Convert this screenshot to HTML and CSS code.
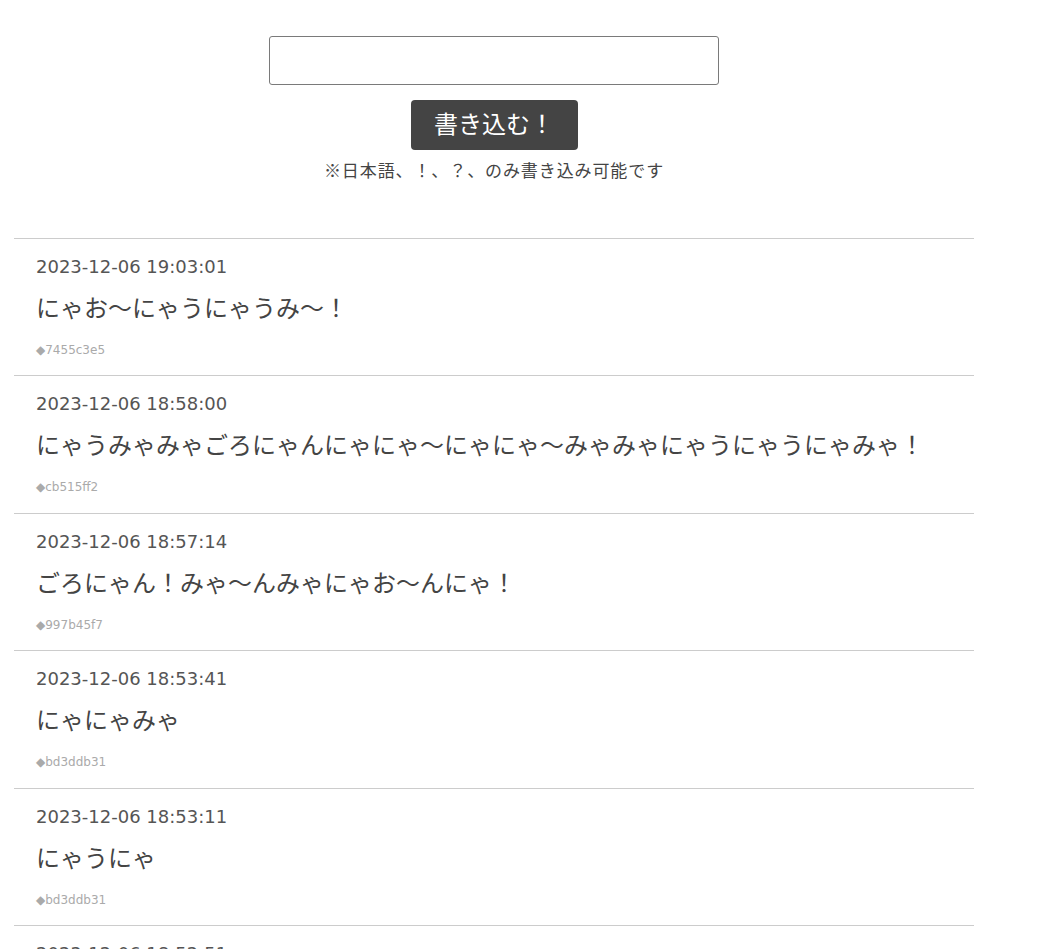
FILE: index.html
```html
<!DOCTYPE html>
<html lang="ja">
<head>
<meta charset="utf-8">
<title>にゃー掲示板</title>
<link rel="stylesheet" href="styles.css">
</head>
<body>
<div class="page">
  <form class="post-form" onsubmit="return false">
    <input class="post-input" type="text" aria-label="書き込み">
    <button class="post-button" type="submit">書き込む！</button>
    <p class="post-note">※日本語、！、？、のみ書き込み可能です</p>
  </form>
  <ul class="posts">
    <li class="post">
      <div class="post-date">2023-12-06 19:03:01</div>
      <div class="post-body">にゃお〜にゃうにゃうみ〜！</div>
      <div class="post-id">◆7455c3e5</div>
    </li>
    <li class="post">
      <div class="post-date">2023-12-06 18:58:00</div>
      <div class="post-body">にゃうみゃみゃごろにゃんにゃにゃ〜にゃにゃ〜みゃみゃにゃうにゃうにゃみゃ！</div>
      <div class="post-id">◆cb515ff2</div>
    </li>
    <li class="post">
      <div class="post-date">2023-12-06 18:57:14</div>
      <div class="post-body">ごろにゃん！みゃ〜んみゃにゃお〜んにゃ！</div>
      <div class="post-id">◆997b45f7</div>
    </li>
    <li class="post">
      <div class="post-date">2023-12-06 18:53:41</div>
      <div class="post-body">にゃにゃみゃ</div>
      <div class="post-id">◆bd3ddb31</div>
    </li>
    <li class="post">
      <div class="post-date">2023-12-06 18:53:11</div>
      <div class="post-body">にゃうにゃ</div>
      <div class="post-id">◆bd3ddb31</div>
    </li>
    <li class="post">
      <div class="post-date">2023-12-06 18:52:51</div>
      <div class="post-body">にゃ〜ん</div>
      <div class="post-id">◆bd3ddb31</div>
    </li>
  </ul>
</div>
</body>
</html>
```

FILE: styles.css
```css
html, body {
  margin: 0;
  padding: 0;
  background: #ffffff;
}

body {
  padding: 0 8px;
  font-family: "DejaVu Sans", "Noto Sans CJK JP", sans-serif;
  color: #444444;
}

.page {
  width: 960px;
  margin-left: 6px;
}

.post-form {
  display: flex;
  flex-direction: column;
  align-items: center;
  padding-top: 36px;
  margin: 0;
}

.post-input {
  box-sizing: border-box;
  width: 450px;
  height: 49px;
  border: 1px solid #7a7a7a;
  border-radius: 3px;
  background: #fff;
  margin: 0;
  padding: 0 8px;
  font-size: 18px;
}

.post-button {
  box-sizing: border-box;
  width: 167px;
  height: 50px;
  margin-top: 15px;
  border: none;
  border-radius: 4px;
  background: #444444;
  color: #ffffff;
  font-family: "Noto Sans CJK JP", sans-serif;
  font-size: 24px;
  line-height: 46px;
  padding: 0 0 4px;
  cursor: pointer;
}

.post-note {
  margin: 8px 0 0;
  font-family: "Noto Sans CJK JP", sans-serif;
  font-size: 17px;
  line-height: 24px;
  letter-spacing: 0.9px;
  color: #444444;
}

.posts {
  list-style: none;
  margin: 56px 0 0;
  padding: 0;
  border-top: 1px solid #cccccc;
}

.post {
  padding: 15px 22px 17.4px;
  border-bottom: 1px solid #cccccc;
}

.post-date {
  padding-top: 1px;
  font-size: 18px;
  line-height: 23px;
  color: #555555;
}

.post-body {
  margin-top: 12px;
  font-family: "Noto Sans CJK JP", sans-serif;
  font-size: 24px;
  line-height: 34px;
  color: #444444;
}

.post-id {
  margin-top: 18px;
  font-size: 12px;
  line-height: 16px;
  color: #aaaaaa;
}
```
